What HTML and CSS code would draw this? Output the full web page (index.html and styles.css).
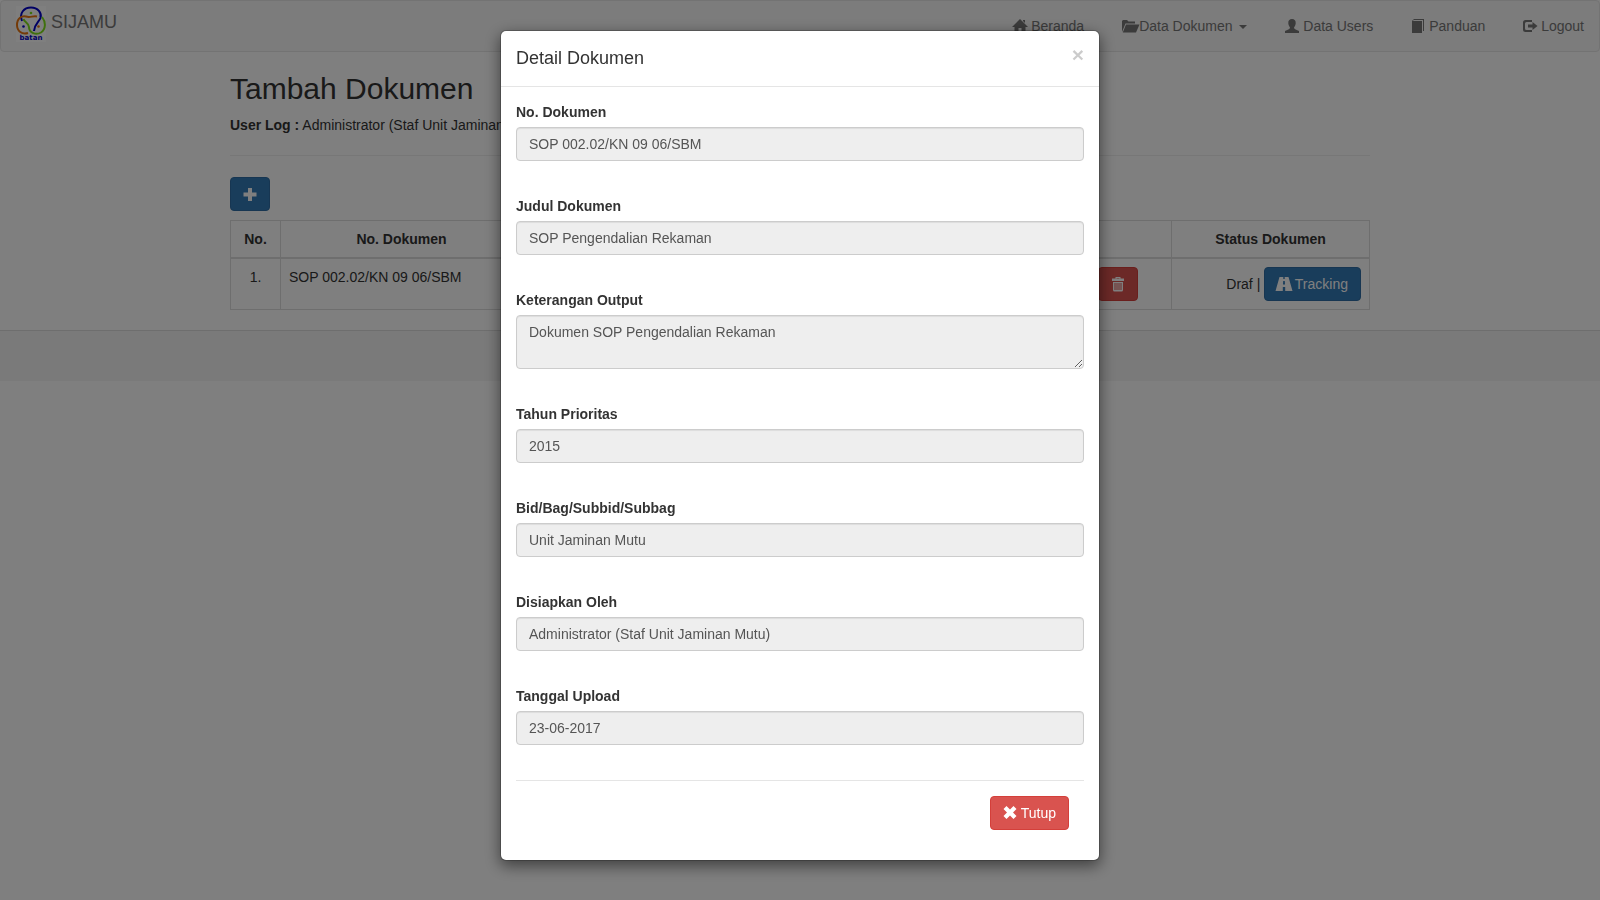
FILE: index.html
```html
<!DOCTYPE html>
<html lang="id">
<head>
<meta charset="utf-8">
<title>SIJAMU</title>
<link rel="stylesheet" href="styles.css">
</head>
<body>
<nav class="navbar">
  <a class="brand" href="#">
    <svg class="logo" viewBox="0 0 30 36" aria-hidden="true">
      <rect width="30" height="36" fill="#fff"/>
      <g fill="none" stroke-width="2">
        <path d="M6 15C3 7 8 1.500 15 1.500C22 1.500 26 7 24.500 12C23 16 18.500 18 18 25" stroke="#0000c8"/>
        <path d="M12 27C6 29 1 25 1 19C1 12 6 9.500 10 10.500C14 12 17 9.500 21 10.500" stroke="#e87511"/>
        <path d="M26 11C30 16 30 23 25 26.500C20 29.500 13 27 13 21C13 17 8 16 7.500 13" stroke="#7fe01c"/>
      </g>
      <circle cx="15" cy="7" r="1.300" fill="#7fe01c"/>
      <circle cx="7.500" cy="20.500" r="1.300" fill="#0000c8"/>
      <circle cx="22.500" cy="20.500" r="1.300" fill="#e87511"/>
      <text class="logo-text" x="15" y="34" text-anchor="middle" fill="#0000c8">batan</text>
    </svg>
    <span>SIJAMU</span>
  </a>
  <div class="nav-links">
    <a href="#"><svg class="icon" viewBox="0 0 14 14" aria-hidden="true"><path d="M7 0 15 8H12.500V14H8.500V9H5.500V14H1.500V8H-1L7 0ZM10 1H12V4L10 2Z"/></svg> Beranda</a>
    <a href="#"><svg class="icon" viewBox="0 0 14 14" aria-hidden="true"><path d="M0 13V2L1 1H5L6.500 2.500H13V4.500H3.500L0 13ZM4 5.500H17.500L14 13.500H.8Z"/></svg><span class="flush">Data Dokumen</span> <span class="caret"></span></a>
    <a href="#"><svg class="icon" viewBox="0 0 14 14" aria-hidden="true"><path d="M7 0C9.500 0 11 1.500 10.700 4.500C10.500 6.500 9.500 7.500 9 8.500C9 10 10.500 10.300 14 12V14H0V12C3.500 10.300 5 10 5 8.500C4.500 7.500 3.500 6.500 3.300 4.500C3 1.500 4.500 0 7 0Z"/></svg> Data Users</a>
    <a href="#"><svg class="icon" viewBox="0 0 14 14" aria-hidden="true"><path d="M3 0H13V12H12V1H2.500L2 2H11V14H1V2Z"/></svg> Panduan</a>
    <a href="#"><svg class="icon" viewBox="0 0 14 14" aria-hidden="true"><path d="M2.500 1H9V3H3.500Q2 3 2 4.500V9.500Q2 11 3.500 11H9V13H2.500Q0 13 0 10.500V3.500Q0 1 2.500 1ZM9.500 3 14.500 7 9.500 11V8.500H5V5.500H9.500Z"/></svg> Logout</a>
  </div>
</nav>

<main class="container">
  <h2>Tambah Dokumen</h2>
  <p class="user-log"><strong>User Log :</strong> Administrator (Staf Unit Jaminan Mutu)</p>
  <hr>
  <button class="btn btn-primary" type="button" aria-label="Tambah"><svg class="icon" viewBox="0 0 14 14" aria-hidden="true"><path d="M5 1H9V5.500H13.500V9.500H9V14H5V9.500H.5V5.500H5Z"/></svg></button>
  <table class="table">
    <thead>
      <tr><th class="col-no">No.</th><th class="col-doc">No. Dokumen</th><th></th><th class="col-action"></th><th class="col-status">Status Dokumen</th></tr>
    </thead>
    <tbody>
      <tr>
        <td class="center">1.</td>
        <td>SOP 002.02/KN 09 06/SBM</td>
        <td></td>
        <td class="actions"><button class="btn btn-danger" type="button" aria-label="Hapus"><svg class="icon" viewBox="0 0 14 14" aria-hidden="true"><path fill-rule="evenodd" d="M4.500 0H9.500V1.500H13V4H1V1.500H4.500ZM5.500 1V1.500H8.500V1ZM2 5H12V13Q12 14.500 10.500 14.500H3.500Q2 14.500 2 13ZM3.500 6V13H4.500V6ZM5.500 6V13H6.500V6ZM7.500 6V13H8.500V6ZM9.500 6V13H10.500V6Z"/></svg></button></td>
        <td class="status">Draf | <button class="btn btn-primary" type="button"><svg class="icon" viewBox="0 0 14 14" aria-hidden="true"><path fill-rule="evenodd" d="M2.500 0H6.300V2H7.700V0H11.500L15.500 14H8.200V10H5.800V14H-1.500ZM6.200 4 6 7.500H8L7.800 4Z"/></svg> Tracking</button></td>
      </tr>
    </tbody>
  </table>
</main>
<footer class="footer"></footer>

<div class="backdrop">
  <div class="modal" role="dialog" aria-modal="true" aria-labelledby="modal-title">
    <header class="modal-header">
      <h4 id="modal-title">Detail Dokumen</h4>
      <button class="close" type="button" aria-label="Close">×</button>
    </header>
    <form class="modal-body">
      <div class="field"><label for="nomor">No. Dokumen</label><input id="nomor" type="text" value="SOP 002.02/KN 09 06/SBM" readonly></div>
      <div class="field"><label for="judul">Judul Dokumen</label><input id="judul" type="text" value="SOP Pengendalian Rekaman" readonly></div>
      <div class="field"><label for="output">Keterangan Output</label><textarea id="output" rows="2" readonly>Dokumen SOP Pengendalian Rekaman</textarea></div>
      <div class="field"><label for="tahun">Tahun Prioritas</label><input id="tahun" type="text" value="2015" readonly></div>
      <div class="field"><label for="bagian">Bid/Bag/Subbid/Subbag</label><input id="bagian" type="text" value="Unit Jaminan Mutu" readonly></div>
      <div class="field"><label for="oleh">Disiapkan Oleh</label><input id="oleh" type="text" value="Administrator (Staf Unit Jaminan Mutu)" readonly></div>
      <div class="field"><label for="tanggal">Tanggal Upload</label><input id="tanggal" type="text" value="23-06-2017" readonly></div>
      <div class="modal-footer">
        <button class="btn btn-danger" type="button"><svg class="icon" viewBox="0 0 14 14" aria-hidden="true"><path d="M3.500 0 7 3.500 10.500 0 13.500 3 10 6.500 13.500 10 10.500 13 7 9.500 3.500 13 .5 10 4 6.500 .5 3Z"/></svg> Tutup</button>
      </div>
    </form>
  </div>
</div>
</body>
</html>
```
FILE: styles.css
```css
* { box-sizing: border-box; }
body {
  margin: 0;
  font: 14px/20px "Liberation Sans", Arial, sans-serif;
  color: #333;
  background: #fff;
}
input, textarea, button { font: inherit; }
a { color: inherit; text-decoration: none; }

.icon {
  width: 14px;
  height: 14px;
  overflow: visible;
  fill: currentColor;
  vertical-align: -2px;
}

.navbar {
  display: flex;
  justify-content: space-between;
  min-height: 52px;
  margin-bottom: 20px;
  border: 1px solid #e7e7e7;
  border-radius: 4px;
  background: #f8f8f8;
  color: #777;
}
.brand {
  display: flex;
  gap: 5px;
  padding: 5px 15px;
  font-size: 18px;
  line-height: 32px;
}
.logo { width: 30px; height: 36px; }
.logo-text { font: bold 7px "DejaVu Sans", sans-serif; }
.nav-links { display: flex; gap: 8px; }
.nav-links a { padding: 15px; white-space: nowrap; }
.flush { margin-left: 3px; }
.caret {
  display: inline-block;
  margin-left: 3px;
  border: 4px solid transparent;
  border-top-color: currentColor;
  border-bottom: 0;
  vertical-align: middle;
}

.container {
  max-width: 1170px;
  margin: 0 auto;
  padding: 0 15px;
}
h2 { margin: 0 0 10px; font-size: 30px; font-weight: 500; line-height: 33px; }
.user-log { margin: 0; }
hr { margin: 20px 0 21px; border: 0; border-top: 1px solid #eee; }

.btn {
  padding: 6px 12px;
  border: 1px solid;
  border-radius: 4px;
  color: #fff;
  white-space: nowrap;
}
.btn-primary { background: #337ab7; border-color: #2e6da4; }
.btn-danger { background: #d9534f; border-color: #d43f3a; }

.table {
  width: 100%;
  margin: 9px 0 20px;
  border-collapse: collapse;
  table-layout: fixed;
}
.table th, .table td {
  padding: 8px;
  border: 1px solid #ddd;
  vertical-align: top;
}
.table th { border-bottom-width: 2px; }
.col-no { width: 50px; }
.col-doc { width: 242px; }
.col-action { width: 211px; }
.col-status { width: 198px; }
.center { text-align: center; }
.table .actions { padding-right: 33px; text-align: right; }
.status { text-align: right; }

.footer {
  height: 51px;
  border-top: 1px solid #ddd;
  background: #f5f5f5;
}

.backdrop {
  position: fixed;
  inset: 0;
  overflow: auto;
  padding: 30px 10px;
  background: rgba(0, 0, 0, .5);
}
.modal {
  max-width: 600px;
  margin: 0 auto;
  border: 1px solid rgba(0, 0, 0, .2);
  border-radius: 6px;
  background: #fff;
  background-clip: padding-box;
  box-shadow: 0 5px 15px rgba(0, 0, 0, .5);
}
.modal-header {
  display: flex;
  justify-content: space-between;
  align-items: flex-start;
  padding: 15px;
  border-bottom: 1px solid #e5e5e5;
}
h4 { margin: 0; font-size: 18px; font-weight: 500; line-height: 25px; }
.close {
  margin-top: -2px;
  padding: 0;
  border: 0;
  background: none;
  color: #000;
  font-size: 21px;
  font-weight: bold;
  line-height: 21px;
  opacity: .2;
}
.modal-body { padding: 15px; }
.field { margin-bottom: 35px; }
.field label { display: block; margin-bottom: 5px; font-weight: bold; }
.field input, .field textarea {
  display: block;
  width: 100%;
  min-height: 34px;
  padding: 6px 12px;
  border: 1px solid #ccc;
  border-radius: 4px;
  background: #eee;
  color: #555;
  box-shadow: inset 0 1px 1px rgba(0, 0, 0, .075);
}
.modal-footer {
  padding: 15px;
  border-top: 1px solid #e5e5e5;
  text-align: right;
}
```
